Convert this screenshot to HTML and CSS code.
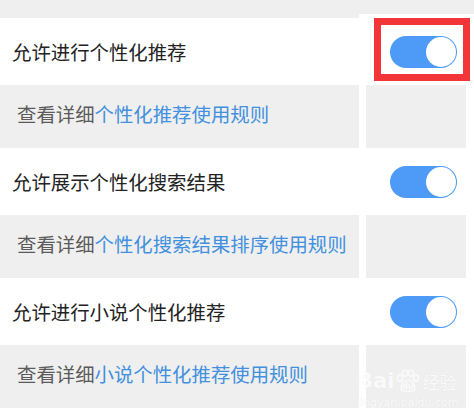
FILE: index.html
```html
<!DOCTYPE html>
<html lang="zh-CN">
<head>
<meta charset="utf-8">
<link rel="stylesheet" href="styles.css">
</head>
<body>
<div class="page">
  <div class="band"><div class="band-left"></div><div class="band-right"></div></div>

  <div class="setting">
    <span class="label">允许进行个性化推荐</span>
    <div class="switch-wrap">
      <div class="toggle"><div class="knob"></div></div>
      <div class="highlight"></div>
    </div>
  </div>
  <div class="detail-row">
    <div class="detail"><span class="muted">查看详细</span><span class="link">个性化推荐使用规则</span></div>
    <div class="side"></div>
  </div>

  <div class="setting">
    <span class="label">允许展示个性化搜索结果</span>
    <div class="switch-wrap">
      <div class="toggle"><div class="knob"></div></div>
    </div>
  </div>
  <div class="detail-row">
    <div class="detail"><span class="muted">查看详细</span><span class="link">个性化搜索结果排序使用规则</span></div>
    <div class="side"></div>
  </div>

  <div class="setting">
    <span class="label">允许进行小说个性化推荐</span>
    <div class="switch-wrap">
      <div class="toggle"><div class="knob"></div></div>
    </div>
  </div>
  <div class="detail-row">
    <div class="detail"><span class="muted">查看详细</span><span class="link">小说个性化推荐使用规则</span></div>
    <div class="side"></div>
  </div>

  <div class="watermark">
    <div class="wm-top">
      <span class="wm-bai">Bai</span>
      <svg class="wm-paw" width="26" height="24" viewBox="0 0 26 24">
        <g fill="none" stroke="#ffffff" stroke-width="1.6">
          <ellipse cx="5" cy="9" rx="2.6" ry="3.2"/>
          <ellipse cx="10" cy="4" rx="2.6" ry="3.2"/>
          <ellipse cx="16" cy="4" rx="2.6" ry="3.2"/>
          <ellipse cx="21" cy="9" rx="2.6" ry="3.2"/>
          <path d="M6 20 C6 14 10 11 13 11 C16 11 20 14 20 20 C20 23 6 23 6 20 Z"/>
        </g>
        <text x="13" y="20" text-anchor="middle" class="wm-du">du</text>
      </svg>
      <span class="wm-jy">经验</span>
    </div>
    <div class="wm-url">jingyan.baidu.com</div>
  </div>
</div>
</body>
</html>
```
FILE: styles.css
```css
* { box-sizing: border-box; }
html, body { margin: 0; padding: 0; background: #ffffff; }
body {
  font-family: "Noto Sans CJK SC", "Noto Sans", sans-serif;
  width: 474px;
  height: 420px;
  overflow: hidden;
}
.page { position: relative; width: 474px; height: 420px; background: #ffffff; }

.band { display: flex; align-items: flex-start; height: 18px; }
.band-left { width: 359px; height: 18px; background: #efefef; }
.band-right { flex: 1; height: 14px; background: #efefef; }

.setting {
  height: 67px;
  display: flex;
  align-items: center;
  justify-content: space-between;
  padding-left: 12px;
  padding-right: 17px;
  background: #ffffff;
}
.label {
  font-size: 19.4px;
  color: #232323;
  line-height: 1;
}

.switch-wrap { position: relative; }
.toggle {
  width: 67px;
  height: 32px;
  border-radius: 16px;
  background: #4d9bf6;
  display: flex;
  justify-content: flex-end;
  align-items: center;
  padding-right: 1px;
}
.knob {
  width: 30px;
  height: 30px;
  border-radius: 50%;
  background: #ffffff;
}
.highlight {
  position: absolute;
  left: -16px;
  top: -18px;
  width: 96px;
  height: 63px;
  border: 7.5px solid #f3353a;
}

.detail-row { display: flex; height: 63px; }
.detail {
  width: 359px;
  background: #efefef;
  display: flex;
  align-items: center;
  padding-left: 17px;
  padding-bottom: 6px;
  font-size: 19.4px;
  line-height: 1;
}
.muted { color: #5a5a5a; }
.link { color: #4290de; }
.side { width: 100px; margin-left: 7px; background: #efefef; }

.watermark {
  position: absolute;
  left: 357px;
  top: 368px;
  width: 100px;
  opacity: 0.7;
}
.wm-top { display: flex; align-items: center; gap: 1px; height: 26px; }
.wm-bai {
  font-family: "DejaVu Sans", sans-serif;
  font-weight: bold;
  font-size: 21px;
  color: #ffffff;
  text-shadow: 0 0 1px #dddddd;
  line-height: 1;
}
.wm-paw { display: block; }
.wm-du {
  font-family: "DejaVu Sans", sans-serif;
  font-weight: bold;
  font-size: 8px;
  fill: #ffffff;
}
.wm-jy {
  font-size: 17px;
  color: #ffffff;
  text-shadow: 0 0 1px #dddddd;
  line-height: 1;
}
.wm-url {
  font-family: "DejaVu Sans", sans-serif;
  font-size: 11px;
  color: #ffffff;
  text-shadow: 0 0 1px #dddddd;
  line-height: 1;
  margin-top: 3px;
}
```
